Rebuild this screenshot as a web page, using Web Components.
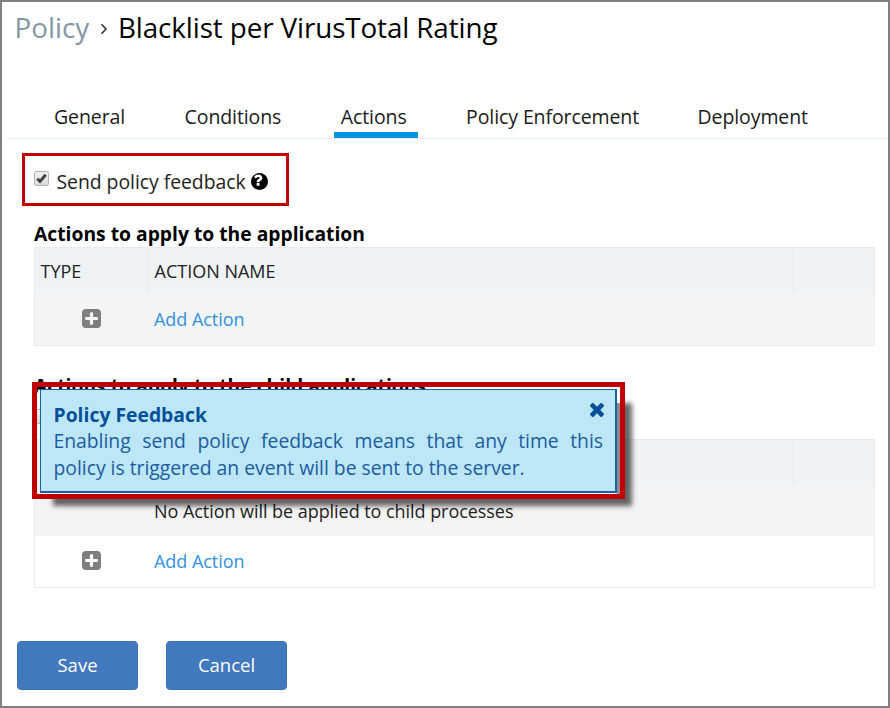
<!DOCTYPE html>
<html lang="en">
<head>
<meta charset="utf-8">
<title>Policy</title>
<style>
html,body{margin:0;height:100%}
body{font-family:"Open Sans","Noto Sans",sans-serif;color:#111;background:#fff;overflow:hidden}
</style>
</head>
<body>
<policy-page>
  <page-title section="Policy">Blacklist per VirusTotal Rating</page-title>
  <tab-bar>
    <tab-item>General</tab-item>
    <tab-item>Conditions</tab-item>
    <tab-item active>Actions</tab-item>
    <tab-item>Policy Enforcement</tab-item>
    <tab-item>Deployment</tab-item>
  </tab-bar>
  <feedback-option>Send policy feedback</feedback-option>
  <action-section heading="Actions to apply to the application">
    <action-head><span slot="type">TYPE</span><span slot="name">ACTION NAME</span></action-head>
    <action-row shaded link style="--h:51px">Add Action</action-row>
  </action-section>
  <action-section heading="Actions to apply to the child applications" child>
    <action-head></action-head>
    <action-row shaded style="--h:50px">No Action will be applied to child processes</action-row>
    <action-row link style="--h:51px">Add Action</action-row>
  </action-section>
  <button-bar><push-button>Save</push-button><push-button>Cancel</push-button></button-bar>
  <help-popup slot="overlay" heading="Policy Feedback">Enabling send policy feedback means that any time this policy is triggered an event will be sent to the server.</help-popup>
</policy-page>
<script>
const define=(name,html,setup)=>{
  const t=document.createElement('template');
  t.innerHTML=html;
  customElements.define(name,class extends HTMLElement{
    connectedCallback(){
      if(this.shadowRoot)return;
      const root=this.attachShadow({mode:'open'});
      root.append(t.content.cloneNode(true));
      if(setup)setup(this,root);
    }
  });
};

define('policy-page',`<style>
:host{display:flex;flex-direction:column;position:relative;box-sizing:border-box;width:890px;height:708px;border:2px solid #808080;background:#fff}
</style><slot></slot><slot name="overlay"></slot>`);

define('page-title',`<style>
:host{display:flex;align-items:center;height:50px;padding-left:12.5px;font-size:27.8px;line-height:50px;white-space:nowrap;color:#000}
.s{color:#8497a6;width:85px}
svg{width:8px;height:12px;margin:4px 10.500px 0 0}
.n{letter-spacing:-.1px}
</style><span class="s"></span><svg viewBox="0 0 8 12"><path d="M1.5 1.2 6 6 1.500 10.800" fill="none" stroke="#2b2b3c" stroke-width="1.500"/></svg><span class="n"><slot></slot></span>`,
(el,r)=>{r.querySelector('.s').textContent=el.getAttribute('section')});

define('tab-bar',`<style>
:host{display:flex;gap:42px;margin:48px 0 0 4px;padding-left:41.5px;border-bottom:1px solid #e7edf1}
</style><slot></slot>`);

define('tab-item',`<style>
:host{display:block;box-sizing:border-box;height:38px;padding:0 11px 0 6.500px;line-height:34px;font-size:19.5px;letter-spacing:-.1px;white-space:nowrap;color:#1a1a1a;border-bottom:6px solid transparent}
:host([active]){border-bottom-color:#0491e6}
:host(:last-child){margin-left:-1px}
</style><slot></slot>`);

define('check-box',`<style>
:host{display:block;width:15px;height:15px}
svg{display:block}
</style><svg width="15" height="15" viewBox="0 0 15 15"><defs><linearGradient id="g" x2="0" y2="1"><stop stop-color="#f2f2f2"/><stop offset="1" stop-color="#d9d9d9"/></linearGradient></defs><rect x=".5" y=".5" width="14" height="14" rx="2" fill="url(#g)" stroke="#b0b0b0"/><path class="m" d="M3.300 7.800 6 10.400 11.700 3.800" fill="none" stroke="#3e3e3e" stroke-width="2.900"/></svg>`,
(el,r)=>{if(!el.hasAttribute('checked'))r.querySelector('.m').remove()});

define('feedback-option',`<style>
:host{display:flex;align-items:center;box-sizing:border-box;width:267px;height:53px;margin:14px 0 0 20px;padding-left:9px;border:3px solid #c00000;font-size:19.4px;white-space:nowrap;color:#222}
check-box{margin:0 7.500px 3px 0}
span{line-height:27px;padding-top:3px;letter-spacing:-.04px}
svg{width:17px;height:17px;margin:4px 0 0 5px;fill:#000}
</style><check-box checked></check-box><span><slot></slot></span><svg viewBox="128 128 1536 1536"><path d="M896 1248v-192q0-14-9-23t-23-9h-192q-14 0-23 9t-9 23v192q0 14 9 23t23 9h192q14 0 23-9t9-23zm256-672q0-88-55.5-163t-138.5-116-170-41q-243 0-371 213-15 24 8 42l132 100q7 6 19 6 16 0 25-12 53-68 86-92 34-24 86-24 48 0 85.500 26t37.500 59q0 38-20 61t-68 45q-63 28-115.500 86.500t-52.500 125.500v36q0 14 9 23t23 9h192q14 0 23-9t9-23q0-19 21.500-49.500t54.500-49.500q32-18 49-28.500t46-35 44.500-48 28-60.500 12.500-81zm512 320q0 209-103 385.500t-279.500 279.500-385.500 103-385.500-103-279.500-279.500-103-385.500 103-385.500 279.500-279.500 385.500-103 385.500 103 279.500 279.500 103 385.500z"/></svg>`);

define('action-section',`<style>
:host{display:block;width:841px;margin:14px 0 0 32px}
:host([child]){margin-top:26px}
h2{margin:0;font-size:19.3px;font-weight:700;line-height:27px;height:27px;color:#000;white-space:nowrap}
.c{display:none;height:40px;padding:10px 0 0 1px;box-sizing:border-box}
:host([child]) .c{display:block}
.t{border:1px solid #e6edf2}
</style><h2></h2><div class="c"><check-box></check-box></div><div class="t"><slot></slot></div>`,
(el,r)=>{r.querySelector('h2').textContent=el.getAttribute('heading')});

define('action-head',`<style>
:host{display:grid;grid-template-columns:114px 645px 1fr;height:46px;background:#eff3f6;font-size:18px;line-height:46px;color:#222}
div{padding-left:5.500px;border-right:1px solid #e6ecf2;white-space:nowrap;box-sizing:border-box}
div:last-child{border:0}
</style><div><slot name="type"></slot></div><div><slot name="name"></slot></div><div></div>`);

define('action-row',`<style>
:host{display:grid;grid-template-columns:114px 1fr;align-items:center;height:var(--h);font-size:18px;letter-spacing:-.05px;white-space:nowrap;color:#222}
:host([shaded]){background:#f4f4f4}
:host([link]) span{color:#2f92e4;margin-bottom:2px}
span{padding-left:5px;line-height:26px}
:host(:not([link])) svg{visibility:hidden}
svg{width:19px;height:19px;margin:0 0 2px 47px;fill:#7f7f7f}
</style><svg viewBox="128 128 1536 1536"><path d="M1408 960v-128q0-26-19-45t-45-19h-320v-320q0-26-19-45t-45-19h-128q-26 0-45 19t-19 45v320h-320q-26 0-45 19t-19 45v128q0 26 19 45t45 19h320v320q0 26 19 45t45 19h128q26 0 45-19t19-45v-320h320q26 0 45-19t19-45zm256-544v960q0 119-84.500 203.500t-203.500 84.500h-960q-119 0-203.500-84.500t-84.500-203.500v-960q0-119 84.500-203.500t203.500-84.500h960q119 0 203.500 84.500t84.500 203.500z"/></svg><span><slot></slot></span>`);

define('button-bar',`<style>
:host{display:flex;gap:28px;margin:53px 0 0 15px}
</style><slot></slot>`);

define('push-button',`<style>
:host{display:block;box-sizing:border-box;width:121px;height:49px;border-radius:4px;border:1px solid #3b71b6;background:#4178be;color:#fff;font-size:18.5px;line-height:46px;text-align:center}
</style><slot></slot>`);

define('help-popup',`<style>
:host{display:block;position:absolute;left:30px;top:380px;box-sizing:border-box;width:593px;height:117px;border:5px solid #c00000;padding:2px 3px;box-shadow:14px 14px 5px -7px rgba(0,0,0,.6);background:linear-gradient(#8c8c8c,#8c8c8c) 100% 16px/3px 100% no-repeat}
.b{box-sizing:border-box;height:104px;border:1px solid #1c5f9f;border-right-width:2px;border-bottom-width:2px;background:#bde6f7;padding:12px 12px 0 12.500px;color:#1c5c9f;font-size:19.35px;line-height:26.500px}
header{display:flex;justify-content:space-between;color:#05509b;font-weight:700}
svg{width:14px;height:14px;margin:1px -1px 0 0;fill:#05509b}
p{margin:-.5px 0 0;text-align:justify;letter-spacing:-.02px}
</style><div class="b"><header><span></span><svg viewBox="302 366 1188 1188"><path d="M1490 1322q0 40-28 68l-136 136q-28 28-68 28t-68-28l-294-294-294 294q-28 28-68 28t-68-28l-136-136q-28-28-28-68t28-68l294-294-294-294q-28-28-28-68t28-68l136-136q28-28 68-28t68 28l294 294 294-294q28-28 68-28t68 28l136 136q28 28 28 68t-28 68l-294 294 294 294q28 28 28 68z"/></svg></header><p><slot></slot></p></div>`,
(el,r)=>{r.querySelector('header span').textContent=el.getAttribute('heading')});
</script>
</body>
</html>
